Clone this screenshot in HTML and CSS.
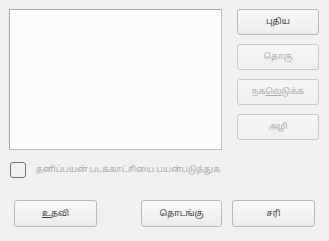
FILE: index.html
```html
<!DOCTYPE html>
<html lang="ta">
<head>
  <meta charset="UTF-8">
  <title>படக்காட்சி</title>
  <link rel="stylesheet" href="styles.css">
</head>
<body>
  <div class="dialog">
    <div class="top">
      <div class="list"></div>
      <div class="side">
        <button class="btn">புதிய</button>
        <button class="btn" disabled>தொகு</button>
        <button class="btn" disabled>நக<u>லெ</u>டுக்க</button>
        <button class="btn" disabled>அழி</button>
      </div>
    </div>
    <label class="check">
      <span class="box"></span>
      <span class="check-text">தனிப்பயன் படக்காட்சியை பயன்படுத்துக</span>
    </label>
    <div class="bottom">
      <button class="btn"><u>உ</u>தவி</button>
      <button class="btn start">தொடங்கு</button>
      <button class="btn">சரி</button>
    </div>
  </div>
</body>
</html>
```

FILE: styles.css
```css
body {
  margin: 0;
  background-color: #eff0f1;
  font-family: 'Noto Sans Tamil', 'Noto Sans', 'DejaVu Sans', sans-serif;
  font-size: 8.5px;
  color: #31363b;
}
.dialog {
  width: 329px;
  height: 241px;
  box-sizing: border-box;
  display: flex;
  flex-direction: column;
}
.top {
  display: flex;
  padding: 9px 10px 0 9px;
  gap: 15px;
}
.list {
  flex: none;
  width: 213px;
  height: 141px;
  box-sizing: border-box;
  background-color: #fcfcfc;
  border: 1px solid #bcbebf;
  border-top-color: #a8aaac;
  border-left-color: #a8aaac;
}
.side {
  display: flex;
  flex-direction: column;
  gap: 9px;
}
.btn {
  width: 82px;
  height: 26px;
  box-sizing: border-box;
  border: 1px solid #b9babb;
  border-radius: 3px;
  background: linear-gradient(#f8f8f8, #ececed);
  font-family: inherit;
  font-size: 8.5px;
  color: #3a3e42;
  padding: 0;
}
.btn:disabled {
  color: #acaeb0;
  border-color: #c8c9ca;
  background: linear-gradient(#f5f5f6, #eeeff0);
}
.check {
  display: flex;
  align-items: center;
  gap: 10px;
  margin: 12px 0 0 10px;
}
.box {
  flex: none;
  width: 16px;
  height: 16px;
  box-sizing: border-box;
  border: 1px solid #6e7275;
  border-radius: 3px;
  background-color: #eff0f1;
}
.check-text {
  color: #a9abad;
}
.bottom {
  display: flex;
  padding: 22px 14px 0 14px;
}
.bottom .btn {
  flex: none;
  width: 83px;
  height: 27px;
}
.bottom .start {
  margin-left: auto;
  margin-right: 10px;
  width: 81px;
}
```
